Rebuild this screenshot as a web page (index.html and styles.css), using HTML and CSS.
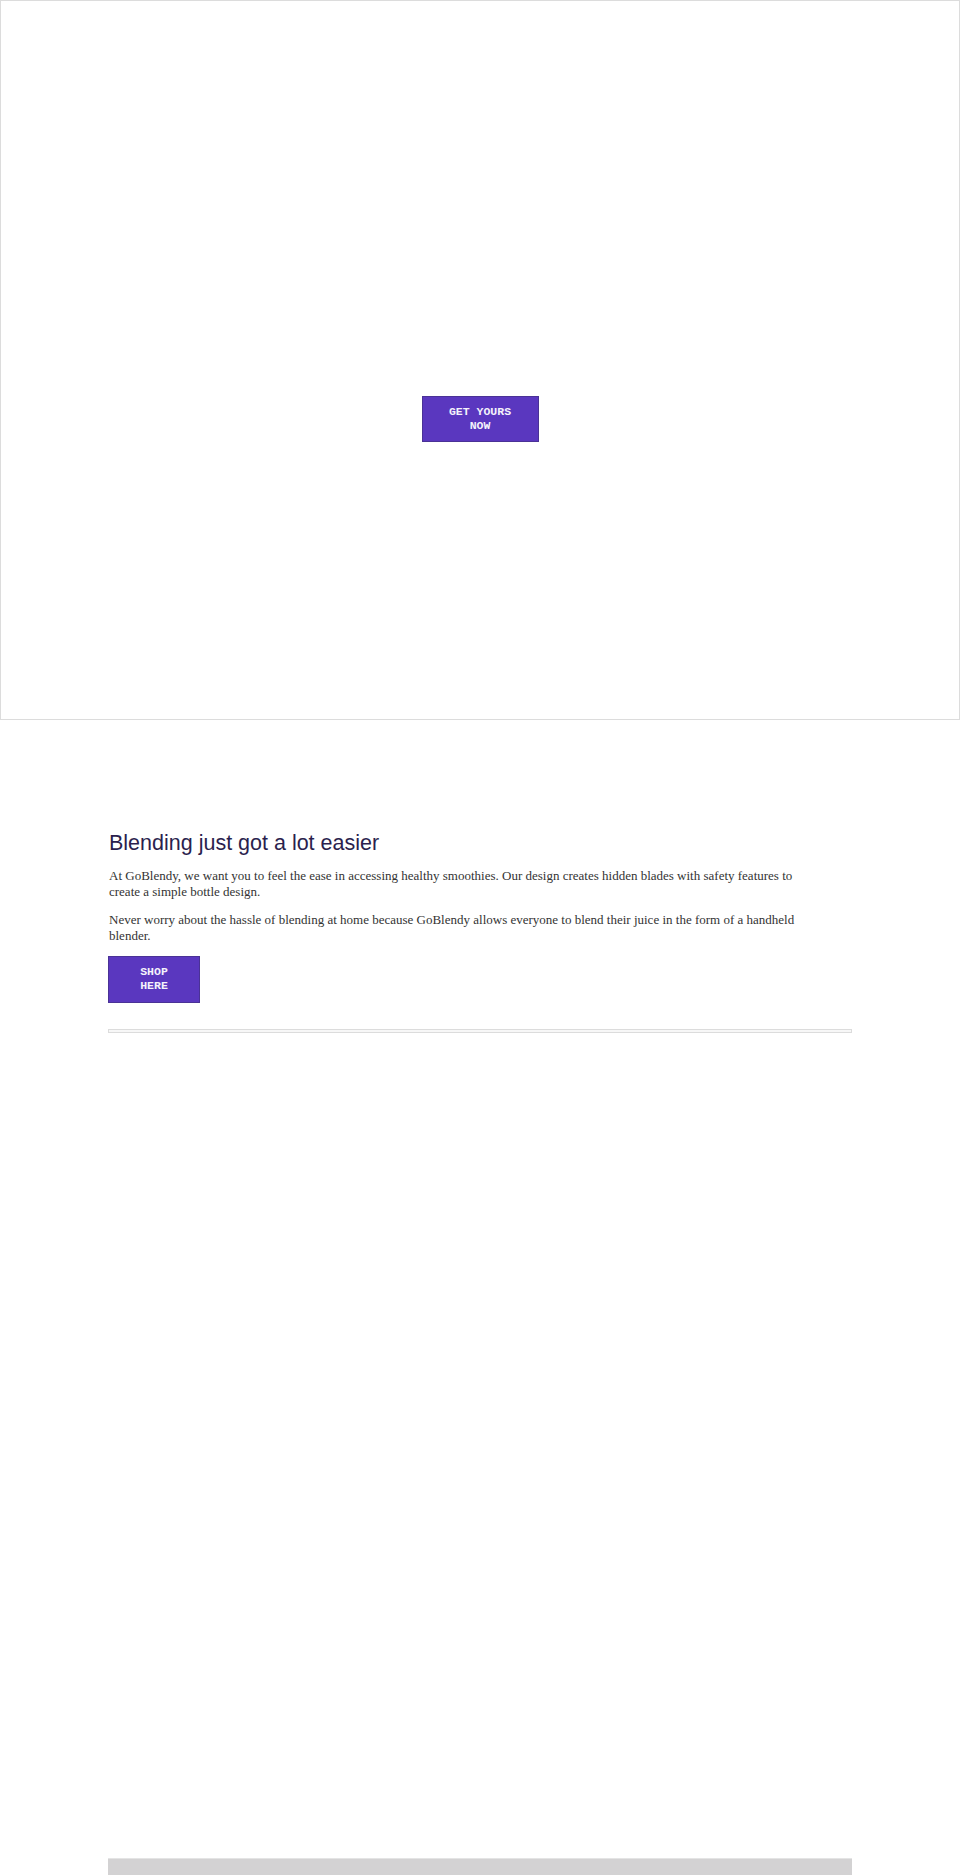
FILE: index.html
```html
<!DOCTYPE html>
<html lang="en">
<head>
<meta charset="utf-8">
<title>GoBlendy</title>
<link rel="stylesheet" href="styles.css">
</head>
<body>
<section class="hero">
  <a class="btn btn-hero" href="#">GET YOURS NOW</a>
</section>
<section class="intro">
  <h1 class="intro-title">Blending just got a lot easier</h1>
  <p class="intro-text">At GoBlendy, we want you to feel the ease in accessing healthy smoothies. Our design creates hidden blades with safety features to create a simple bottle design.</p>
  <p class="intro-text">Never worry about the hassle of blending at home because GoBlendy allows everyone to blend their juice in the form of a handheld blender.</p>
  <a class="btn btn-shop" href="#">SHOP HERE</a>
  <div class="rule"></div>
  <div class="media-space"></div>
  <div class="media-box"></div>
</section>
</body>
</html>
```

FILE: styles.css
```css
html, body {
  margin: 0;
  padding: 0;
  background: #ffffff;
}

body {
  font-family: "Liberation Serif", serif;
  color: #333333;
}

.hero {
  box-sizing: border-box;
  height: 720px;
  border: 1px solid #dcdcdc;
  display: flex;
  justify-content: center;
  align-items: flex-start;
  padding-top: 395px;
}

.btn {
  display: block;
  box-sizing: border-box;
  background: #5a37bf;
  border: 1px solid #4a3296;
  color: #f4f2fb;
  text-decoration: none;
  text-align: center;
  font-family: "Liberation Mono", "DejaVu Sans Mono", monospace;
  font-weight: 700;
  font-size: 11.5px;
  letter-spacing: 0;
  line-height: 14px;
}

.btn-hero {
  width: 117px;
  height: 46px;
  padding: 8px 18px;
}

.intro {
  width: 744px;
  margin: 0 auto 0 108px;
  padding-top: 110px;
}

.intro-title {
  margin: 0 0 12px 1px;
  font-family: "Liberation Sans", Arial, sans-serif;
  font-weight: 400;
  font-size: 21.5px;
  line-height: 26px;
  color: #2b1f4e;
}

.intro-text {
  margin: 0 0 12px 1px;
  max-width: 700px;
  font-size: 13px;
  line-height: 16px;
  color: #333333;
}

.btn-shop {
  width: 92px;
  height: 47px;
  margin-top: 10px;
  padding: 8px 26px;
}

.rule {
  margin-top: 26px;
  height: 2px;
  border: 1px solid #dcdcdc;
  background: #f7f7f7;
}

.media-space {
  height: 825px;
}

.media-box {
  height: 18px;
  background: #d3d2d3;
  border-top: 1px solid #e4e4e4;
}
```
